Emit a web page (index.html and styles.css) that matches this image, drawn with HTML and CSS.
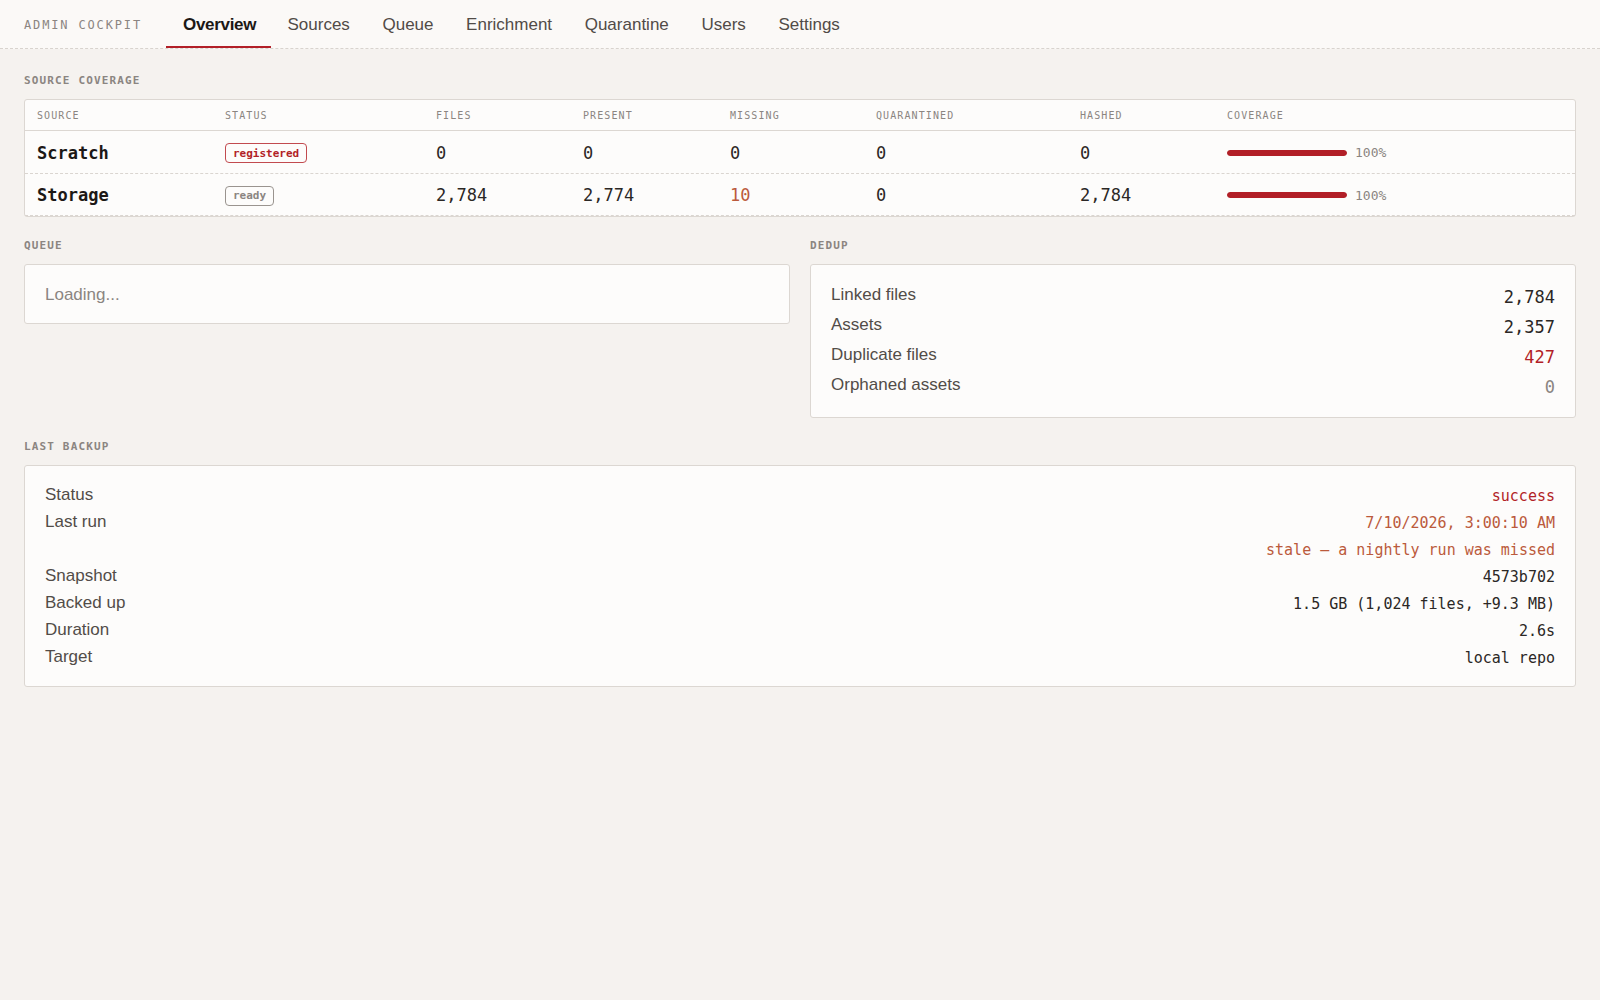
FILE: index.html
```html
<!DOCTYPE html>
<html lang="en">
<head>
<meta charset="utf-8">
<title>Admin Cockpit</title>
<link rel="stylesheet" href="styles.css">
</head>
<body>
<header class="nav">
  <div class="brand">ADMIN COCKPIT</div>
  <nav class="tabs">
    <a class="tab active">Overview</a>
    <a class="tab">Sources</a>
    <a class="tab">Queue</a>
    <a class="tab">Enrichment</a>
    <a class="tab">Quarantine</a>
    <a class="tab">Users</a>
    <a class="tab">Settings</a>
  </nav>
</header>
<main class="main">
  <section class="section">
    <h2 class="label">SOURCE COVERAGE</h2>
    <div class="card table">
      <div class="trow thead">
        <div class="cell">SOURCE</div>
        <div class="cell">STATUS</div>
        <div class="cell">FILES</div>
        <div class="cell">PRESENT</div>
        <div class="cell">MISSING</div>
        <div class="cell">QUARANTINED</div>
        <div class="cell">HASHED</div>
        <div class="cell">COVERAGE</div>
      </div>
      <div class="trow tbody">
        <div class="cell name">Scratch</div>
        <div class="cell"><span class="badge badge-red">registered</span></div>
        <div class="cell num">0</div>
        <div class="cell num">0</div>
        <div class="cell num">0</div>
        <div class="cell num">0</div>
        <div class="cell num">0</div>
        <div class="cell"><div class="cov"><span class="bar"><span class="fill" style="width:100%"></span></span><span class="pct">100%</span></div></div>
      </div>
      <div class="trow tbody">
        <div class="cell name">Storage</div>
        <div class="cell"><span class="badge badge-gray">ready</span></div>
        <div class="cell num">2,784</div>
        <div class="cell num">2,774</div>
        <div class="cell num warn">10</div>
        <div class="cell num">0</div>
        <div class="cell num">2,784</div>
        <div class="cell"><div class="cov"><span class="bar"><span class="fill" style="width:100%"></span></span><span class="pct">100%</span></div></div>
      </div>
    </div>
  </section>

  <div class="split">
    <section class="section">
      <h2 class="label">QUEUE</h2>
      <div class="card loading">Loading...</div>
    </section>
    <section class="section">
      <h2 class="label">DEDUP</h2>
      <div class="card dedup">
        <div class="kv"><span class="k">Linked files</span><span class="v">2,784</span></div>
        <div class="kv"><span class="k">Assets</span><span class="v">2,357</span></div>
        <div class="kv"><span class="k">Duplicate files</span><span class="v red">427</span></div>
        <div class="kv"><span class="k">Orphaned assets</span><span class="v muted">0</span></div>
      </div>
    </section>
  </div>

  <section class="section">
    <h2 class="label">LAST BACKUP</h2>
    <div class="card backup">
      <div class="bk"><span class="k">Status</span><span class="v red">success</span></div>
      <div class="bk"><span class="k">Last run</span><span class="v warn">7/10/2026, 3:00:10 AM</span></div>
      <div class="bk"><span class="k"></span><span class="v warn">stale — a nightly run was missed</span></div>
      <div class="bk"><span class="k">Snapshot</span><span class="v">4573b702</span></div>
      <div class="bk"><span class="k">Backed up</span><span class="v">1.5 GB (1,024 files, +9.3 MB)</span></div>
      <div class="bk"><span class="k">Duration</span><span class="v">2.6s</span></div>
      <div class="bk"><span class="k">Target</span><span class="v">local repo</span></div>
    </div>
  </section>
</main>
</body>
</html>
```

FILE: styles.css
```css
* { box-sizing: border-box; }
html, body { margin: 0; padding: 0; }
body {
  background: #f5f2ef;
  font-family: "Liberation Sans", Arial, sans-serif;
  color: #2b2725;
}

.nav {
  display: flex;
  align-items: stretch;
  height: 49px;
  padding: 0 24px;
  background: #fbf9f7;
  border-bottom: 1px dashed #d8d3ce;
}
.brand {
  display: flex;
  align-items: center;
  padding-top: 1px;
  font-family: "DejaVu Sans Mono", monospace;
  font-size: 12px;
  letter-spacing: 1.85px;
  color: #8b8581;
  margin-right: 24px;
}
.tabs { display: flex; align-items: stretch; }
.tab {
  display: flex;
  align-items: center;
  padding: 3px 16.3px 0 16.3px;
  font-size: 17px;
  color: #514b47;
  border-bottom: 2px solid transparent;
  cursor: pointer;
}
.tab.active {
  color: #1c1816;
  font-weight: 600;
  border-bottom-color: #b21f27;
  padding-left: 17px;
  padding-right: 15px;
  letter-spacing: -0.3px;
}

.main { padding: 24px; }
.section { margin-bottom: 21px; }
.label {
  margin: 0 0 11px 0;
  padding-top: 1px;
  font-family: "DejaVu Sans Mono", monospace;
  font-size: 11px;
  line-height: 14px;
  font-weight: 600;
  letter-spacing: 1.15px;
  color: #8b8581;
}
.card {
  background: #fdfcfb;
  border: 1px solid #dcd7d2;
  border-radius: 3px;
}

/* table */
.trow {
  display: grid;
  grid-template-columns: 200px 211px 147px 147px 146px 204px 147px 1fr;
  align-items: center;
}
.thead {
  height: 31px;
  border-bottom: 1px solid #dcd7d2;
  font-family: "DejaVu Sans Mono", monospace;
  font-size: 10px;
  letter-spacing: 1.1px;
  color: #8b8581;
  padding-top: 1px;
}
.tbody {
  height: 43px;
  border-bottom: 1px dashed #dad5d0;
  font-family: "DejaVu Sans Mono", monospace;
  font-size: 17px;
  color: #2b2725;
  padding-top: 1px;
}
.tbody:last-child { height: 42px; }
.cell:first-child { padding-left: 12px; }
.name { font-weight: 700; color: #1c1816; }
.warn { color: #bb5a3c; }
.red { color: #b21f27; }
.muted { color: #8b8581; }

.badge {
  display: inline-flex;
  align-items: center;
  height: 20px;
  padding: 0 7px;
  border: 1px solid;
  border-radius: 4px;
  font-family: "DejaVu Sans Mono", monospace;
  font-size: 11px;
  font-weight: 700;
  vertical-align: middle;
}
.badge-red { color: #b21f27; border-color: #c24a4f; }
.badge-gray { color: #8b8581; border-color: #9a948f; font-weight: 600; }

.cov { display: flex; align-items: center; gap: 8px; }
.bar {
  display: block;
  width: 120px;
  height: 6px;
  border-radius: 3px;
  background: #ece7e3;
  overflow: hidden;
}
.fill { display: block; height: 100%; background: #b21f27; border-radius: 3px; }
.pct {
  font-family: "DejaVu Sans Mono", monospace;
  font-size: 13px;
  color: #8b8581;
}

/* split */
.split {
  display: grid;
  grid-template-columns: 1fr 1fr;
  column-gap: 20px;
  align-items: start;
}
.loading {
  padding: 20px 20px 18px 20px;
  font-size: 17px;
  line-height: 20px;
  color: #8b8581;
}

.dedup { padding: 15px 20px 17px 20px; }
.kv {
  display: flex;
  justify-content: space-between;
  align-items: center;
  height: 30px;
}
.k { font-size: 17px; color: #524c48; }
.kv .v {
  font-family: "DejaVu Sans Mono", monospace;
  font-size: 17px;
  color: #2b2725;
  padding-top: 3px;
}
.kv .v.red { color: #b21f27; }
.kv .v.muted { color: #8b8581; }

.backup { padding: 15px 20px 16px 20px; }
.bk {
  display: flex;
  justify-content: space-between;
  align-items: center;
  height: 27px;
}
.bk .v {
  font-family: "DejaVu Sans Mono", monospace;
  font-size: 15px;
  color: #2b2725;
  padding-top: 2px;
}
.bk .v.red { color: #b21f27; }
.bk .v.warn { color: #bb5a3c; }
```
